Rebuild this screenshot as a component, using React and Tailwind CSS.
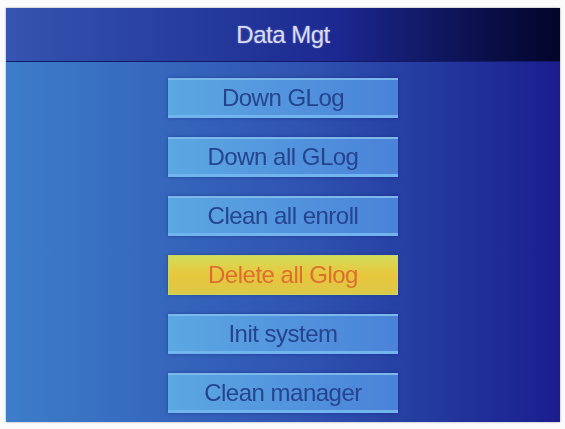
import React from "react";

const items = [
  { label: "Down GLog" },
  { label: "Down all GLog" },
  { label: "Clean all enroll" },
  { label: "Delete all Glog", active: true },
  { label: "Init system" },
  { label: "Clean manager" },
];

export default function App() {
  return (
    <div
      className="w-[565px] h-[429px] bg-[#fbfbfb] pl-[6px] pt-[8px]"
      style={{ fontFamily: '"Liberation Sans", Arial, sans-serif' }}
    >
      <div className="w-[554px] h-[414px] flex flex-col shadow-[0_0_2px_rgba(60,60,80,0.5)] overflow-hidden">
        <div className="h-[54px] shrink-0 flex items-center justify-center bg-gradient-to-r from-[#3654b0] via-[#1c2890] via-60% to-[#04052a] border-b border-[#141a6a]">
          <span className="text-[24px] text-[#dadcf4] tracking-[-0.5px] [text-shadow:0_0_2px_rgba(200,200,255,0.5)]">
            Data Mgt
          </span>
        </div>
        <div className="flex-1 flex flex-col items-center pt-[16px] gap-[19px] bg-gradient-to-r from-[#3d7dca] via-[#2f52b0] via-55% to-[#1b1c8e]">
          {items.map((it) =>
            it.active ? (
              <div
                key={it.label}
                className="w-[230px] h-[40px] flex items-center justify-center bg-gradient-to-b from-[#d2dc58] via-[#e8c63c] to-[#dcc848] border border-[#c8d868] shadow-[0_0_3px_rgba(40,40,120,0.6)]"
              >
                <span className="text-[24px] text-[#dc6e2e] tracking-[-0.5px] blur-[0.5px]">
                  {it.label}
                </span>
              </div>
            ) : (
              <div
                key={it.label}
                className="w-[230px] h-[40px] flex items-center justify-center bg-gradient-to-r from-[#5ca8e2] to-[#4a82d8] border-t-[2px] border-b-[3px] border-t-[#7cb8ec] border-b-[#72b4ee] shadow-[0_0_3px_rgba(20,30,110,0.5)]"
              >
                <span className="text-[24px] text-[#26438f] tracking-[-0.5px] blur-[0.5px]">
                  {it.label}
                </span>
              </div>
            )
          )}
        </div>
      </div>
    </div>
  );
}
